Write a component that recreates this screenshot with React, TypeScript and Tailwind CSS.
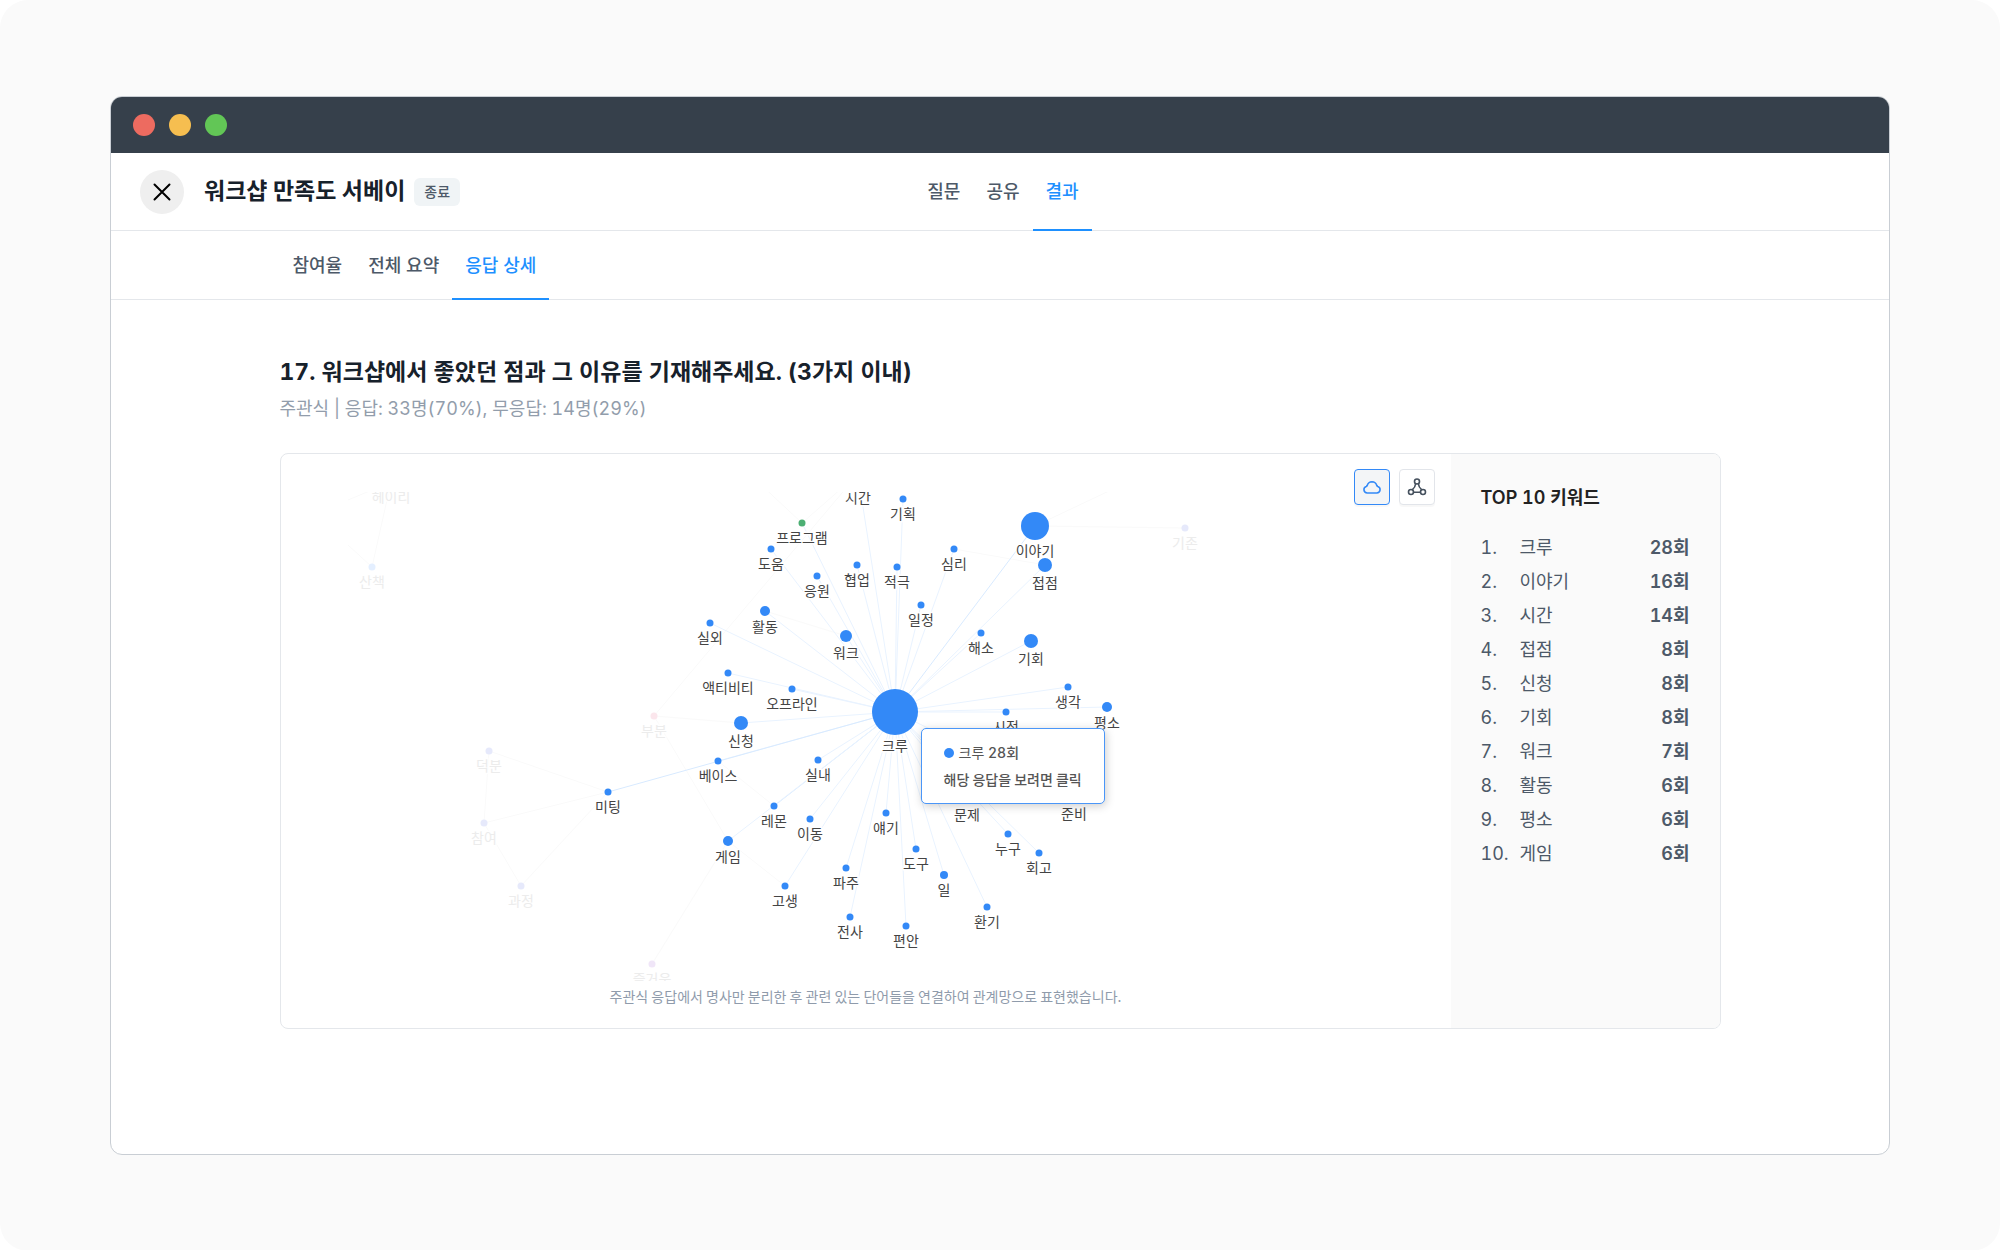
import { useState } from 'react';

type Tone = 'green' | 'pink' | 'violet' | 'indigo' | 'blue';

interface KeywordNode {
  label: string;
  x: number;
  y: number;
  r?: number;
  tone?: Tone;
  strong?: boolean;
}

const HUB: KeywordNode = { label: '크루', x: 547, y: 220, r: 23 };

// Words that are directly connected to the selected keyword
const linkedNodes: KeywordNode[] = [
  { label: '시간', x: 510, y: -17, r: 12 },
  { label: '기획', x: 555, y: 7 },
  { label: '프로그램', x: 454, y: 31, tone: 'green' },
  { label: '도움', x: 423, y: 57 },
  { label: '응원', x: 469, y: 84 },
  { label: '협업', x: 509, y: 73 },
  { label: '적극', x: 549, y: 75 },
  { label: '심리', x: 606, y: 57 },
  { label: '이야기', x: 687, y: 34, r: 14, strong: true },
  { label: '접점', x: 697, y: 73, r: 7 },
  { label: '일정', x: 573, y: 113 },
  { label: '활동', x: 417, y: 119, r: 5 },
  { label: '실외', x: 362, y: 131 },
  { label: '워크', x: 498, y: 144, r: 6 },
  { label: '해소', x: 633, y: 141 },
  { label: '기회', x: 683, y: 149, r: 7 },
  { label: '액티비티', x: 380, y: 181 },
  { label: '오프라인', x: 444, y: 197 },
  { label: '생각', x: 720, y: 195 },
  { label: '신청', x: 393, y: 231, r: 7 },
  { label: '평소', x: 759, y: 215, r: 5 },
  { label: '시점', x: 658, y: 220 },
  { label: '베이스', x: 370, y: 269 },
  { label: '실내', x: 470, y: 268 },
  { label: '레몬', x: 426, y: 314, strong: true },
  { label: '이동', x: 462, y: 327 },
  { label: '게임', x: 380, y: 349, r: 5 },
  { label: '얘기', x: 538, y: 321 },
  { label: '파주', x: 498, y: 376 },
  { label: '도구', x: 568, y: 357 },
  { label: '일', x: 596, y: 383, r: 4 },
  { label: '고생', x: 437, y: 394 },
  { label: '전사', x: 502, y: 425 },
  { label: '편안', x: 558, y: 434 },
  { label: '환기', x: 639, y: 415 },
  { label: '누구', x: 660, y: 342 },
  { label: '회고', x: 691, y: 361 },
  { label: '문제', x: 619, y: 308 },
  { label: '준비', x: 726, y: 307 },
  { label: '미팅', x: 260, y: 300, strong: true },
];

const fadedNodes: KeywordNode[] = [
  { label: '헤이리', x: 43, y: -10, tone: 'blue' },
  { label: '산책', x: 24, y: 75, tone: 'blue' },
  { label: '기존', x: 837, y: 36, tone: 'indigo' },
  { label: '부분', x: 306, y: 224, tone: 'pink' },
  { label: '덕분', x: 141, y: 259, tone: 'indigo' },
  { label: '참여', x: 136, y: 331, tone: 'indigo' },
  { label: '과정', x: 173, y: 394, tone: 'indigo' },
  { label: '즐거움', x: 304, y: 472, tone: 'violet' },
];

const fadedLinks = [
  [43, -10, 24, 75],
  [24, 75, 0, 53],
  [0, 8, 43, -10],
  [141, 259, 260, 300],
  [141, 259, 136, 331],
  [136, 331, 260, 300],
  [136, 331, 173, 394],
  [173, 394, 260, 300],
  [306, 224, 393, 231],
  [306, 224, 510, -18],
  [306, 224, 380, 349],
  [304, 472, 380, 349],
  [370, 269, 426, 314],
  [380, 349, 437, 394],
  [454, 31, 510, -18],
  [454, 31, 410, -10],
  [606, 57, 697, 73],
  [417, 119, 498, 144],
  [687, 34, 780, -10],
  [687, 34, 837, 36],
];

const toneFill: Record<Tone, string> = {
  green: 'fill-[#4caf73]',
  pink: 'fill-[#fbe6ec]',
  violet: 'fill-[#f0e6f8]',
  indigo: 'fill-[#e6e9fb]',
  blue: 'fill-[#e4efff]',
};

const keywords = [
  { word: '크루', count: 28 },
  { word: '이야기', count: 16 },
  { word: '시간', count: 14 },
  { word: '접점', count: 8 },
  { word: '신청', count: 8 },
  { word: '기회', count: 8 },
  { word: '워크', count: 7 },
  { word: '활동', count: 6 },
  { word: '평소', count: 6 },
  { word: '게임', count: 6 },
];

const CloseIcon = () => (
  <svg viewBox="0 0 18 18" className="size-[18px] fill-none stroke-black stroke-2" strokeLinecap="round" aria-hidden="true">
    <path d="M1.5 1.5l15 15M16.5 1.5l-15 15" />
  </svg>
);

const CloudIcon = () => (
  <svg viewBox="0 0 20 16" className="h-4 w-5 fill-none stroke-current stroke-[1.6]" strokeLinejoin="round" aria-hidden="true">
    <path d="M5.2 14h9.6a3.4 3.4 0 0 0 1-6.6c-.5-.2-.8-.5-1-1A5.2 5.2 0 0 0 10 2.7a5.2 5.2 0 0 0-4.8 3.7c-.2.5-.5.8-1 1a3.4 3.4 0 0 0 1 6.6z" />
  </svg>
);

const NetworkIcon = () => (
  <svg viewBox="0 0 20 18" className="h-[18px] w-5 fill-none stroke-current stroke-[1.6]" strokeLinecap="round" aria-hidden="true">
    <circle cx="10" cy="3.5" r="2.5" />
    <circle cx="4" cy="14" r="2.5" />
    <circle cx="16" cy="14" r="2.5" />
    <path d="M8.6 5.7C8.4 8 7.2 10.2 5.4 11.7M11.4 5.7c.2 2.3 1.4 4.5 3.2 6M6.6 14.2h6.8" />
  </svg>
);

interface TabBarProps {
  label: string;
  tabs: string[];
  active: string;
  onChange: (tab: string) => void;
}

const TabBar = ({ label, tabs, active, onChange }: TabBarProps) => (
  <nav aria-label={label} className="flex self-stretch">
    {tabs.map((tab) => (
      <button
        key={tab}
        type="button"
        onClick={() => onChange(tab)}
        className={`-mb-px cursor-pointer border-b-2 px-[13px] pt-0.5 text-lg font-medium ${
          tab === active ? 'border-[#1e90ff] text-[#1e90ff]' : 'border-transparent text-[#4d5968]'
        }`}
      >
        {tab}
      </button>
    ))}
  </nav>
);

const GraphNode = ({ node, faded = false }: { node: KeywordNode; faded?: boolean }) => {
  const r = node.r ?? 3.5;
  return (
    <g>
      <circle cx={node.x} cy={node.y} r={r} className={node.tone ? toneFill[node.tone] : 'fill-[#3389f7]'} />
      <text
        x={node.x}
        y={node.y + r + 16}
        textAnchor="middle"
        className={`stroke-white stroke-[3px] text-sm [paint-order:stroke] ${faded ? 'fill-[#ececec]' : 'fill-[#444444]'}`}
      >
        {node.label}
      </text>
    </g>
  );
};

const KeywordGraph = () => (
  <div className="relative w-[1036px] max-w-full">
    <svg viewBox="0 0 1036 489" className="block w-full overflow-hidden" role="img" aria-label="키워드 관계망">
      {fadedLinks.map(([x1, y1, x2, y2], i) => (
        <line key={i} x1={x1} y1={y1} x2={x2} y2={y2} className="stroke-[#fafafa]" />
      ))}
      {linkedNodes.map((node) => (
        <line
          key={node.label}
          x1={HUB.x}
          y1={HUB.y}
          x2={node.x}
          y2={node.y}
          className={node.strong ? 'stroke-[#d8eaff]' : 'stroke-[#e9f3ff]'}
        />
      ))}
      {fadedNodes.map((node) => (
        <GraphNode key={node.label} node={node} faded />
      ))}
      {linkedNodes.map((node) => (
        <GraphNode key={node.label} node={node} />
      ))}
      <GraphNode node={HUB} />
    </svg>

    {/* Tooltip of the hovered keyword */}
    <div
      role="tooltip"
      className="absolute top-[236px] left-[573px] rounded-[5px] border border-[#4a96f8] bg-white px-[22px] py-[10px] text-sm leading-[27px] text-[#555555] shadow-[1px_2px_10px_rgba(0,0,0,0.2)]"
    >
      <div className="flex items-center gap-[5px]">
        <span className="size-[10px] rounded-full bg-[#3389f7]" />
        <span>
          크루 <span className="font-medium">28회</span>
        </span>
      </div>
      <div className="font-['Noto_Sans_CJK_KR',sans-serif] font-medium whitespace-nowrap">해당 응답을 보려면 클릭</div>
    </div>
  </div>
);

const App = () => {
  const [mainTab, setMainTab] = useState('결과');
  const [subTab, setSubTab] = useState('응답 상세');
  const [view, setView] = useState('cloud');

  const viewButton = 'flex size-9 cursor-pointer items-center justify-center rounded-[4px] border shadow-[0_2px_1px_rgba(0,0,0,0.03)]';

  return (
    <div className="min-h-screen rounded-[28px] bg-[#fafafa] px-[110px] py-24 font-[Inter,'Noto_Sans_CJK_KR',sans-serif]">
      <div className="overflow-hidden rounded-xl border border-[#c9ced4] bg-white">
        {/* Title bar */}
        <div className="flex h-14 items-center gap-[14px] bg-[#36404b] px-[22px]">
          <span className="size-[22px] rounded-full bg-[#ed6b60]" />
          <span className="size-[22px] rounded-full bg-[#f6be50]" />
          <span className="size-[22px] rounded-full bg-[#62c656]" />
        </div>

        {/* Header */}
        <header className="grid h-[78px] grid-cols-[1fr_auto_1fr] items-center border-b border-[#e4e7eb]">
          <div className="flex items-center pl-[29px]">
            <button
              type="button"
              aria-label="닫기"
              className="flex size-11 cursor-pointer items-center justify-center rounded-full bg-[#efefef]"
            >
              <CloseIcon />
            </button>
            <h1 className="ml-5 text-[23px] font-bold text-[#17212b]">워크샵 만족도 서베이</h1>
            <span className="ml-[9px] rounded-md bg-[#f0f4f6] px-[10px] py-1 text-sm font-medium text-[#4d5968]">종료</span>
          </div>
          <div className="flex self-stretch pl-[6px]">
            <TabBar label="서베이 메뉴" tabs={['질문', '공유', '결과']} active={mainTab} onChange={setMainTab} />
          </div>
        </header>

        {/* Sub tabs */}
        <div className="flex h-[69px] border-b border-[#e4e7eb]">
          <div className="mx-auto flex w-full max-w-[1441px]">
            <TabBar label="결과 메뉴" tabs={['참여율', '전체 요약', '응답 상세']} active={subTab} onChange={setSubTab} />
          </div>
        </div>

        <main className="mx-auto w-full max-w-[1441px] pt-[54px] pb-[125px] tabular-nums">
          <h2 className="text-[23px] leading-9 font-bold text-[#17212b]">
            17. 워크샵에서 좋았던 점과 그 이유를 기재해주세요. (3가지 이내)
          </h2>
          <p className="mt-[5px] text-lg text-[#929dab]">주관식 | 응답: 33명(70%), 무응답: 14명(29%)</p>

          <div className="mt-[30px] flex overflow-hidden rounded-lg border border-[#e4e7eb]">
            <section className="relative flex min-w-0 flex-1 flex-col items-center pt-[38px] pb-5">
              <KeywordGraph />
              <p className="mt-[3px] font-['Noto_Sans_CJK_KR',sans-serif] text-sm leading-6 text-[#8f9bab]">
                주관식 응답에서 명사만 분리한 후 관련 있는 단어들을 연결하여 관계망으로 표현했습니다.
              </p>
              <div className="absolute top-[15px] right-4 flex gap-[9px]">
                <button
                  type="button"
                  aria-label="클라우드 보기"
                  onClick={() => setView('cloud')}
                  className={`${viewButton} ${view === 'cloud' ? 'border-[#3389f7] bg-[#f3f5f7] text-[#3389f7]' : 'border-[#e2e5ea] bg-white text-[#46515e]'}`}
                >
                  <CloudIcon />
                </button>
                <button
                  type="button"
                  aria-label="관계망 보기"
                  onClick={() => setView('network')}
                  className={`${viewButton} ${view === 'network' ? 'border-[#3389f7] bg-[#f3f5f7] text-[#3389f7]' : 'border-[#e2e5ea] bg-white text-[#46515e]'}`}
                >
                  <NetworkIcon />
                </button>
              </div>
            </section>

            <aside className="w-[269px] shrink-0 bg-[#fafafa] px-[30px] pt-[30px]">
              <h3 className="text-lg font-semibold text-[#222222]">TOP 10 키워드</h3>
              <ol className="mt-[19px] text-lg leading-[34px] text-[#4d5968]">
                {keywords.map((item, i) => (
                  <li key={item.word} className="flex">
                    <span className="w-[39px]">{i + 1}.</span>
                    <span className="flex-1">{item.word}</span>
                    <span className="font-semibold">{item.count}회</span>
                  </li>
                ))}
              </ol>
            </aside>
          </div>
        </main>
      </div>
    </div>
  );
};

export default App;
